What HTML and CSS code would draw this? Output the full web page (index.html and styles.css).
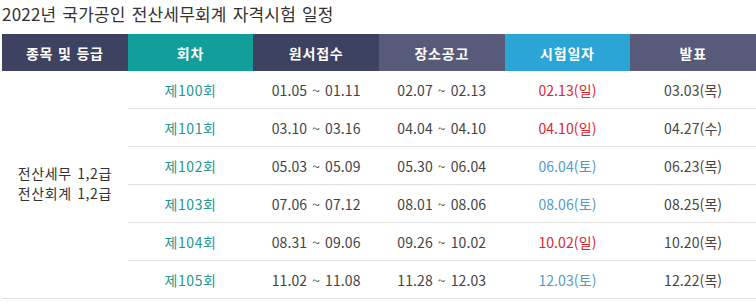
FILE: index.html
```html
<!DOCTYPE html>
<html lang="ko">
<head>
<meta charset="utf-8">
<link rel="stylesheet" href="styles.css">
</head>
<body>
<h2 class="title">2022년 국가공인 전산세무회계 자격시험 일정</h2>
<table class="sched">
  <thead>
    <tr>
      <th class="h-dark">종목 및 등급</th>
      <th class="h-teal">회차</th>
      <th class="h-dark">원서접수</th>
      <th class="h-gray">장소공고</th>
      <th class="h-blue">시험일자</th>
      <th class="h-gray">발표</th>
    </tr>
  </thead>
  <tbody>
    <tr>
      <td class="kind" rowspan="6"><span class="kline">전산세무 1,2급</span><span class="kline">전산회계 1,2급</span></td>
      <td class="round">제100회</td><td>01.05 ~ 01.11</td><td>02.07 ~ 02.13</td><td class="red">02.13(일)</td><td>03.03(목)</td>
    </tr>
    <tr><td class="round">제101회</td><td>03.10 ~ 03.16</td><td>04.04 ~ 04.10</td><td class="red">04.10(일)</td><td>04.27(수)</td></tr>
    <tr><td class="round">제102회</td><td>05.03 ~ 05.09</td><td>05.30 ~ 06.04</td><td class="blue">06.04(토)</td><td>06.23(목)</td></tr>
    <tr><td class="round">제103회</td><td>07.06 ~ 07.12</td><td>08.01 ~ 08.06</td><td class="blue">08.06(토)</td><td>08.25(목)</td></tr>
    <tr><td class="round">제104회</td><td>08.31 ~ 09.06</td><td>09.26 ~ 10.02</td><td class="red">10.02(일)</td><td>10.20(목)</td></tr>
    <tr><td class="round">제105회</td><td>11.02 ~ 11.08</td><td>11.28 ~ 12.03</td><td class="blue">12.03(토)</td><td>12.22(목)</td></tr>
  </tbody>
</table>
</body>
</html>
```
FILE: styles.css
```css
html, body {
  margin: 0;
  padding: 0;
  background: #fff;
}
body {
  font-family: "Noto Sans CJK KR", "Noto Sans", sans-serif;
  color: #444;
  padding: 0 0 0 2px;
}
.title {
  margin: 0;
  height: 34px;
  line-height: 27px;
  font-size: 17px;
  font-weight: normal;
  color: #333;
  letter-spacing: 0.2px;
  word-spacing: 1px;
}
.sched {
  width: 754px;
  border-collapse: collapse;
  table-layout: fixed;
}
.sched th {
  height: 37px;
  padding: 0;
  font-size: 14px;
  font-weight: bold;
  color: #fff;
  text-align: center;
  letter-spacing: 0.8px;
}
.h-dark { background: #3d4260; }
.h-teal { background: #129e9a; }
.h-gray { background: #575a78; }
.h-blue { background: #2ba5d5; }
.sched td {
  height: 37px;
  padding: 0;
  font-size: 14px;
  text-align: center;
  border-bottom: 1px solid #e0e0e0;
  color: #444;
  letter-spacing: 0.1px;
  word-spacing: 1px;
}
.sched td.kind {
  color: #333;
  letter-spacing: 0.6px;
  padding-bottom: 4px;
}
.kline {
  display: block;
  line-height: 20px;
}
.sched td.round { color: #1a9891; letter-spacing: 0.6px; }
.sched td.red { color: #e2242d; }
.sched td.blue { color: #4f9bc8; }
```
